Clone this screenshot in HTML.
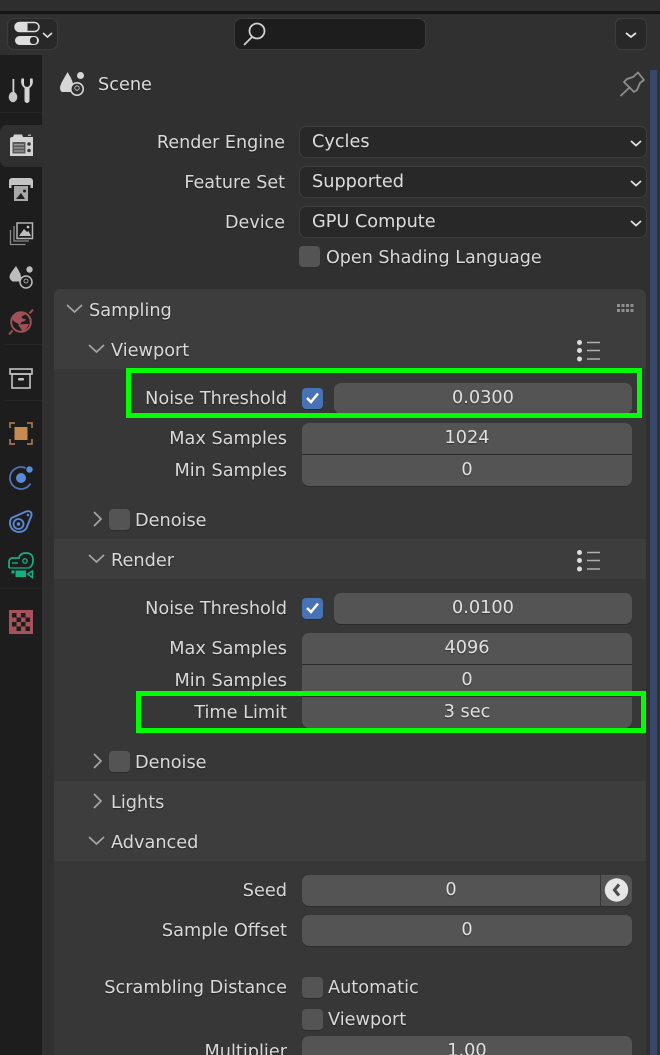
<!DOCTYPE html>
<html><head><meta charset="utf-8">
<style>
html,body{margin:0;padding:0;background:#303030}
#r{position:relative;width:660px;height:1055px;overflow:hidden;background:#303030;font-family:"DejaVu Sans",sans-serif;font-size:17.7px;color:#d9d9d9}
#r div{position:absolute;box-sizing:border-box}
#r svg{position:absolute;overflow:visible}
.t{white-space:nowrap;line-height:24px;height:24px;margin-top:2px;text-shadow:0 1px 1px rgba(0,0,0,.45)}
.l{text-align:right;left:54px;width:233px}
.n{background:#545454;text-align:center;line-height:31px;color:#e0e0e0;text-shadow:0 1px 1px rgba(0,0,0,.4);box-shadow:0 1px 0 #2b2b2b}
.d{left:299px;width:348px;height:32px;background:#282828;border:1px solid #3d3d3d;border-radius:7px;line-height:31px;padding-left:12px;color:#dcdcdc}
.c{width:21px;height:21px;background:#545454;border-radius:4px;box-shadow:0 1px 0 #2b2b2b}
.g{border:5px solid #00ff00;background:transparent}
</style></head><body><div id="r">
<div style="left:0;top:0;width:660px;height:11px;background:#2e2e2e"></div>
<div style="left:0;top:11px;width:660px;height:3px;background:#151515"></div>

<!-- sidebar -->
<div style="left:0;top:55px;width:42px;height:1000px;background:#1d1d1d"></div>
<div style="left:0;top:125px;width:42px;height:42px;background:#303030;border-radius:7px 0 0 7px"></div>

<!-- top controls -->
<div style="left:7px;top:18px;width:51px;height:32px;background:#282828;border:1px solid #3c3c3c;border-radius:7px"></div>
<svg style="left:0;top:0" width="60" height="55"><rect x="15" y="22.500" width="24" height="9" rx="4.500" fill="#2a2a2a" stroke="#dedede" stroke-width="1.500"/><path d="M19.500 22h8v10h-8a5 5 0 0 1 0-10z" fill="#dedede"/><rect x="15" y="36" width="24" height="9" rx="4.500" fill="#dedede"/><rect x="30" y="37" width="7" height="7" rx="3" fill="#2a2a2a"/><path d="M43 33l4.500 4 4.500-4" fill="none" stroke="#dedede" stroke-width="1.600"/></svg>
<div style="left:234px;top:18px;width:192px;height:32px;background:#1d1d1d;border:1px solid #3c3c3c;border-radius:7px"></div>
<svg style="left:0;top:0" width="300" height="55"><circle cx="257" cy="31" r="7.500" fill="none" stroke="#d0d0d0" stroke-width="1.800"/><path d="M252 37l-8 8" stroke="#d0d0d0" stroke-width="1.800"/></svg>
<div style="left:615px;top:18px;width:32px;height:32px;background:#282828;border:1px solid #3c3c3c;border-radius:7px"></div>
<svg style="left:0;top:0" width="660" height="55"><path d="M626 33l5 4 5-4" fill="none" stroke="#e4e4e4" stroke-width="1.800"/></svg>

<!-- scrollbar -->
<div style="left:650px;top:70px;width:6.500px;height:985px;background:#37486a"></div>

<!-- Scene header -->
<svg style="left:0;top:0" width="90" height="100"><path d="M67.500 72c3 5 5.500 9 5.500 13 0 2.500-1 5-2.500 7H62c-1.500-1-2-2.500-2-4 0-4 5-11 7.500-16z" fill="#d6d6d6"/><circle cx="80.500" cy="75.500" r="3.500" fill="#d6d6d6"/><circle cx="77" cy="89" r="6.200" fill="#303030" stroke="#d6d6d6" stroke-width="1.600"/><circle cx="77" cy="88" r="2.200" fill="none" stroke="#d6d6d6" stroke-width=".8"/></svg>
<div class="t" style="left:98px;top:71px;color:#dcdcdc">Scene</div>
<svg style="left:0;top:0" width="660" height="100"><path d="M638 72.500l6 7.500-4 3-3 7-3 2-10-10 3-3 6-2z" fill="none" stroke="#8e8e8e" stroke-width="1.800" stroke-linejoin="round"/><path d="M629 88l-8.500 8" stroke="#8e8e8e" stroke-width="1.800"/></svg>

<!-- sidebar icons -->
<svg style="left:0;top:0" width="42" height="660">
<g fill="#d4d4d4">
<!-- tools -->
<rect x="12.500" y="79" width="1.800" height="13"/><ellipse cx="13" cy="97" rx="4.300" ry="5.200" fill="#c8c8c8"/>
<path d="M21.500 78.500l2.500 0v5.500a3 3 0 0 0 6 0v-5.500h2.500c1 4 0 7.500-3 9.500v12.500a2.200 2.200 0 0 1-5 0V88c-3-2-4-5.500-3-9.500z" fill="#d4d4d4"/>
<!-- render -->
<path d="M10 139a2 2 0 0 1 2-2h1l1-2.500h8l1 2.500h10v19H10z" fill="#d4d4d4"/>
<rect x="28" y="134.500" width="3" height="1.500" fill="#aaa"/>
<rect x="12.500" y="142" width="13" height="11.500" fill="#5a5a5a"/><rect x="14" y="144" width="10" height="1.300" fill="#9a9a9a"/><rect x="14" y="147.200" width="10" height="1.300" fill="#9a9a9a"/><rect x="14" y="150.400" width="10" height="1.300" fill="#9a9a9a"/>
<circle cx="29" cy="144" r="1.800" fill="#3a3a3a"/><circle cx="29" cy="150.500" r="1.800" fill="#3a3a3a"/>
<!-- output -->
<path d="M12 178h18a3 3 0 0 1 3 3v7h-2.500v-3h-19v3H9v-7a3 3 0 0 1 3-3z" fill="#c4c4c4"/><rect x="14" y="186" width="14" height="15" fill="#a8a8a8"/><path d="M16 199l5-6 4 6z" fill="#222"/><circle cx="24.500" cy="191" r="1.500" fill="#222"/>
<!-- view layer -->
<rect x="17" y="223" width="15.500" height="15.500" fill="none" stroke="#b4b4b4" stroke-width="1.500"/><path d="M19 236l5-7 3 3 1.500-1 2.500 5z" fill="#bdbdbd"/><circle cx="28" cy="227" r="1.300"/><path d="M14 226v15h15" fill="none" stroke="#8a8a8a" stroke-width="1.300"/><path d="M10.500 230v14.500h15" fill="none" stroke="#8a8a8a" stroke-width="1.300"/>
<!-- scene -->
<path d="M16 266c3 5 5 8 5 11 0 2-.5 3-1.500 4.500h-7c-2-1.500-3-3-3-4.500 0-3 3.500-7 6.500-11z" fill="#bcbcbc"/><circle cx="29.500" cy="269.500" r="3.200" fill="#bcbcbc"/><circle cx="26" cy="282" r="6" fill="#1d1d1d" stroke="#bcbcbc" stroke-width="1.500"/><circle cx="26" cy="281" r="2" fill="none" stroke="#bcbcbc" stroke-width=".8"/>
</g>
<!-- world -->
<circle cx="21" cy="322" r="9.800" fill="#1d1d1d" stroke="#a14f56" stroke-width="2"/>
<path d="M13 316c3-4 8-5 12-4 1 2-1 4-3 4-1 2 1 3 3 3 2 1 0 2-3 3-2 1-1 2-2 3-2-1-3-2-5-3-2-1-3-3-2-6zM18 325c3-1 8-1 11-1-1 3-4 7-7 7-1-2-2-4-4-6z" fill="#a14f56"/>
<path d="M29.500 313.500l3.500-4M12.500 330.500l-3.500 4" stroke="#a14f56" stroke-width="2"/>
<!-- collection -->
<g fill="none" stroke="#c4c4c4" stroke-width="1.600"><rect x="10" y="369" width="22" height="5"/><rect x="12" y="374" width="18" height="14"/></g><rect x="18" y="378" width="6" height="2.500" rx="1" fill="#c4c4c4"/>
<!-- object -->
<rect x="14.500" y="427" width="13" height="13" fill="#c98a4f"/><path d="M10 428v-5h5M27 423h5v5M32 439v5h-5M15 444h-5v-5" fill="none" stroke="#a8754a" stroke-width="1.700"/>
<!-- physics -->
<circle cx="21" cy="478" r="5" fill="#5b8ad6"/><path d="M30.500 483.500A11 11 0 1 1 25.500 468" fill="none" stroke="#4d74b3" stroke-width="1.800"/><circle cx="29.500" cy="469.500" r="3.200" fill="#5b8ad6"/>
<!-- constraints -->
<path d="M11.500 518L26 511.500Q32 510 31.500 515.500L26.500 528A9 9 0 1 1 11.500 518z" fill="none" stroke="#5b8ad6" stroke-width="1.900"/><circle cx="18.500" cy="524" r="5" fill="none" stroke="#5b8ad6" stroke-width="1.800"/><circle cx="18.500" cy="524" r="1.800" fill="#5b8ad6"/><circle cx="28" cy="515" r="1.300" fill="#5b8ad6"/>
<!-- data camera -->
<path d="M9 568V562Q9 558 13 558H19Q20 553 26 553Q33 553 33 560Q33 566 29 568" fill="none" stroke="#13b083" stroke-width="1.700"/><path d="M9 568h20" stroke="#13b083" stroke-width="1.300"/><path d="M12 563h6" stroke="#13b083" stroke-width="1.400"/><circle cx="25" cy="561" r="2.200" fill="none" stroke="#13b083" stroke-width="1.300"/><rect x="15.500" y="570.500" width="10.500" height="6.500" fill="#13b083"/><rect x="11.500" y="570.500" width="3" height="3" fill="#13b083"/><path d="M27.500 574l5-3v6.500z" fill="none" stroke="#13b083" stroke-width="1.500"/>
<!-- texture -->
<rect x="9" y="610" width="24" height="24" fill="#a6525c"/>
<g fill="#1d1d1d"><rect x="12" y="613" width="4.500" height="4.500"/><rect x="21" y="613" width="4.500" height="4.500"/><rect x="16.500" y="617.500" width="4.500" height="4.500"/><rect x="25.500" y="617.500" width="4.500" height="4.500"/><rect x="12" y="622" width="4.500" height="4.500"/><rect x="21" y="622" width="4.500" height="4.500"/><rect x="16.500" y="626.500" width="4.500" height="4.500"/><rect x="25.500" y="626.500" width="4.500" height="4.500"/></g>
</svg>
<div style="left:0;top:112px;width:42px;height:1px;background:#242424"></div>
<div style="left:3px;top:344px;width:39px;height:1px;background:#252525"></div>
<div style="left:3px;top:400px;width:39px;height:1px;background:#252525"></div>
<div style="left:0;top:588px;width:42px;height:1px;background:#232323"></div>

<!-- top properties -->
<div class="t l" style="top:129px;width:231px;font-size:17.55px">Render Engine</div>
<div class="d" style="top:126px">Cycles</div>
<div class="t l" style="top:169px;width:231px;font-size:17.55px">Feature Set</div>
<div class="d" style="top:166px">Supported</div>
<div class="t l" style="top:209px;width:231px;font-size:17.55px">Device</div>
<div class="d" style="top:206px">GPU Compute</div>
<svg style="left:0;top:0" width="660" height="240"><path d="M631 141l5 4.500 5-4.500M631 181l5 4.500 5-4.500M631 221l5 4.500 5-4.500" fill="none" stroke="#e0e0e0" stroke-width="1.800"/></svg>
<div class="c" style="left:299px;top:246px"></div>
<div class="t" style="left:326px;top:244px;font-size:17.55px">Open Shading Language</div>

<!-- panel -->
<div style="left:54px;top:289px;width:592px;height:766px;background:#373737;border-radius:7px 7px 0 0"></div>
<div style="left:54px;top:289px;width:592px;height:80px;background:#3d3d3d;border-radius:7px 7px 0 0"></div>
<div style="left:54px;top:539px;width:592px;height:40px;background:#3d3d3d"></div>
<div style="left:54px;top:781px;width:592px;height:80px;background:#3d3d3d"></div>
<div style="left:54px;top:529px;width:12px;height:10px;background:#373737;border-radius:0 0 0 7px"></div>
<div style="left:54px;top:771px;width:12px;height:10px;background:#373737;border-radius:0 0 0 7px"></div>

<svg style="left:0;top:0" width="660" height="860" fill="none" stroke="#a6a6a6" stroke-width="1.700">
<path d="M67 305l7.500 7 7.500-7M89 345l7.500 7 7.500-7M89 555l7.500 7 7.500-7M89 837l7.500 7 7.500-7"/>
<path d="M94 512l7 7-7 7M94 754l7 7-7 7M94 794l7 7-7 7"/>
<g stroke="none" fill="#8f8f8f"><rect x="617" y="304" width="3" height="3"/><rect x="621.500" y="304" width="3" height="3"/><rect x="626" y="304" width="3" height="3"/><rect x="630.500" y="304" width="3" height="3"/><rect x="617" y="309" width="3" height="3"/><rect x="621.500" y="309" width="3" height="3"/><rect x="626" y="309" width="3" height="3"/><rect x="630.500" y="309" width="3" height="3"/></g>
<g stroke="none" fill="#dcdcdc"><circle cx="579.500" cy="342.500" r="2.500"/><circle cx="579.500" cy="350.500" r="2.500"/><circle cx="579.500" cy="359" r="2.500"/><circle cx="579.500" cy="552.500" r="2.500"/><circle cx="579.500" cy="560.500" r="2.500"/><circle cx="579.500" cy="569" r="2.500"/></g>
<g stroke="#b0b0b0" stroke-width="1.400"><path d="M587 342.500h13M587 350.500h13M587 359h13M587 552.500h13M587 560.500h13M587 569h13"/></g>
</svg>

<div class="t" style="left:89px;top:297px">Sampling</div>
<div class="t" style="left:111px;top:337px">Viewport</div>
<div class="t l" style="top:385px">Noise Threshold</div>
<div class="c" style="left:302px;top:388px;background:#4772b3"></div>
<svg style="left:0;top:0" width="340" height="410"><path d="M307 398l4 4 7-8.500" fill="none" stroke="#fff" stroke-width="2.500"/></svg>
<div class="n" style="left:334px;top:383px;width:298px;height:31px;border-radius:7px">0.0300</div>
<div class="t l" style="top:425px">Max Samples</div>
<div class="n" style="left:302px;top:423px;width:330px;height:31px;border-radius:7px 7px 0 0">1024</div>
<div class="t l" style="top:457px">Min Samples</div>
<div class="n" style="left:302px;top:455px;width:330px;height:31px;border-radius:0 0 7px 7px">0</div>
<div class="c" style="left:109px;top:509px"></div>
<div class="t" style="left:135px;top:507px">Denoise</div>

<div class="t" style="left:111px;top:547px">Render</div>
<div class="t l" style="top:595px">Noise Threshold</div>
<div class="c" style="left:302px;top:598px;background:#4772b3"></div>
<svg style="left:0;top:0" width="340" height="620"><path d="M307 608l4 4 7-8.500" fill="none" stroke="#fff" stroke-width="2.500"/></svg>
<div class="n" style="left:334px;top:593px;width:298px;height:31px;border-radius:7px">0.0100</div>
<div class="t l" style="top:635px">Max Samples</div>
<div class="n" style="left:302px;top:633px;width:330px;height:31px;border-radius:7px 7px 0 0">4096</div>
<div class="t l" style="top:667px">Min Samples</div>
<div class="n" style="left:302px;top:665px;width:330px;height:31px">0</div>
<div class="t l" style="top:699px">Time Limit</div>
<div class="n" style="left:302px;top:697px;width:330px;height:31px;border-radius:0 0 7px 7px">3 sec</div>
<div class="c" style="left:109px;top:751px"></div>
<div class="t" style="left:135px;top:749px">Denoise</div>

<div class="t" style="left:111px;top:789px">Lights</div>
<div class="t" style="left:111px;top:829px">Advanced</div>

<div class="t l" style="top:877px">Seed</div>
<div class="n" style="left:302px;top:875px;width:298px;height:31px;border-radius:7px 0 0 7px">0</div>
<div style="left:601px;top:875px;width:31px;height:31px;background:#545454;border-radius:0 7px 7px 0;box-shadow:0 1px 0 #2b2b2b"></div>
<svg style="left:0;top:0" width="640" height="910"><circle cx="616.500" cy="890" r="11.700" fill="#e6e6e6"/><path d="M619 884.500l-4.500 5.500 4.500 5.500" fill="none" stroke="#4a4a4a" stroke-width="3"/></svg>
<div class="t l" style="top:917px">Sample Offset</div>
<div class="n" style="left:302px;top:915px;width:330px;height:31px;border-radius:7px">0</div>
<div class="t l" style="top:974px">Scrambling Distance</div>
<div class="c" style="left:302px;top:977px"></div>
<div class="t" style="left:328px;top:974px">Automatic</div>
<div class="c" style="left:302px;top:1009px"></div>
<div class="t" style="left:328px;top:1006px">Viewport</div>
<div class="t l" style="top:1038px">Multiplier</div>
<div class="n" style="left:302px;top:1036px;width:330px;height:31px;border-radius:7px">1.00</div>

<!-- green highlight boxes -->
<div class="g" style="left:126px;top:368px;width:516px;height:50px"></div>
<div class="g" style="left:136px;top:691px;width:510px;height:42px"></div>
</div></body></html>
